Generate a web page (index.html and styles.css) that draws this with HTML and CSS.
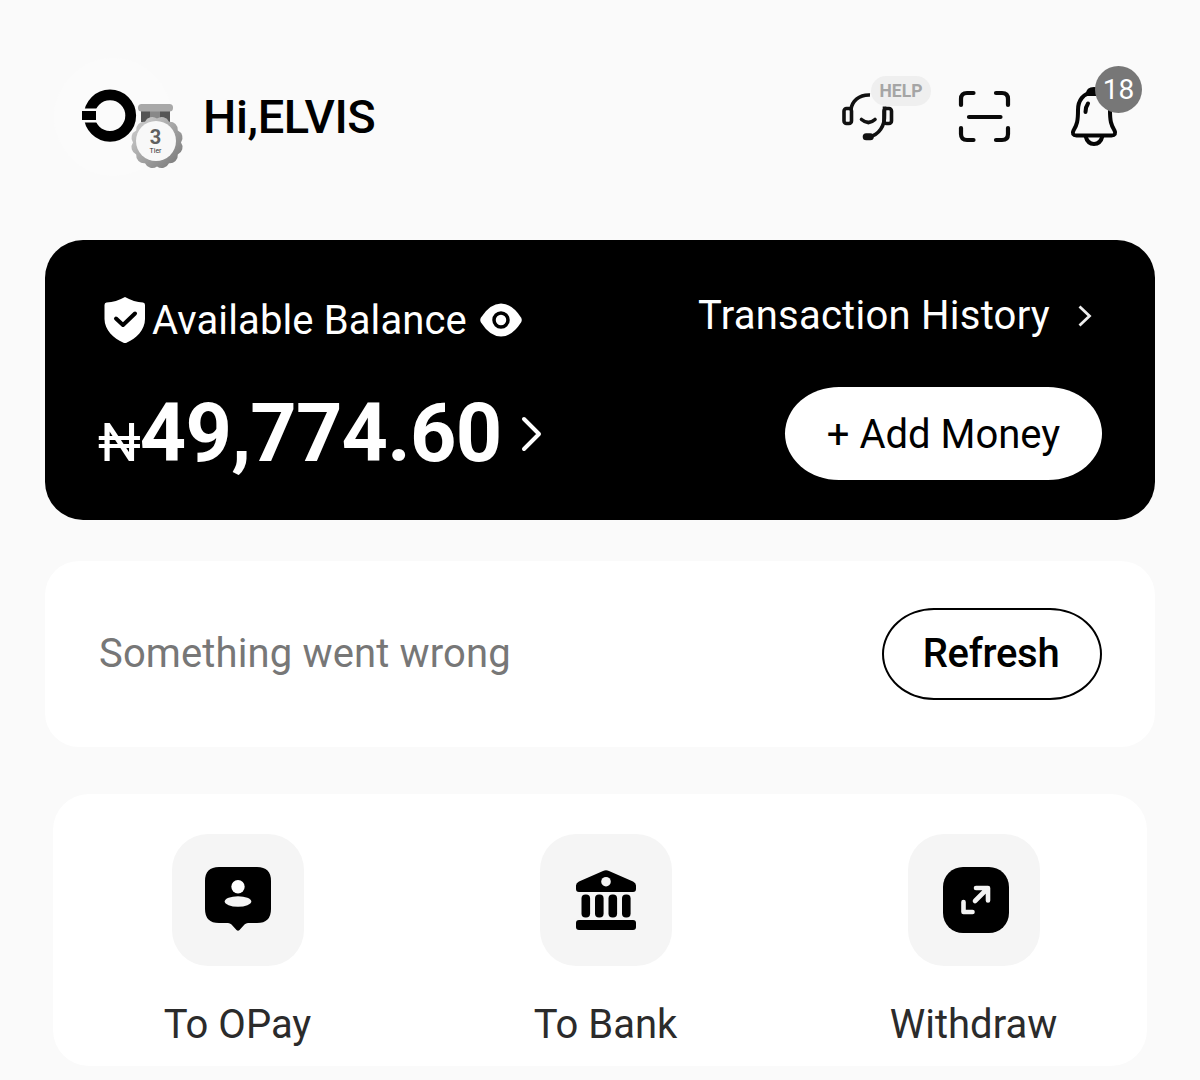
FILE: index.html
```html
<!DOCTYPE html>
<html lang="en">
<head>
    <meta charset="UTF-8">
    <meta name="viewport" content="width=device-width, initial-scale=1.0">
    <title>OPay</title>
    <link rel="stylesheet" href="styles.css">
</head>
<body>

    <header class="topbar">
        <div class="profile">
            <svg class="logo" width="120" height="120" viewBox="0 0 120 120">
                <circle cx="60" cy="60" r="59" fill="#fbfbfb"/>
                <circle cx="57" cy="58.600" r="20.700" fill="none" stroke="#000" stroke-width="10.800"/>
                <rect x="28" y="51.500" width="16" height="14" fill="#fbfbfb"/>
                <rect x="29" y="54" width="14" height="9" fill="#000"/>
            </svg>
            <div class="tier">
                <svg width="54" height="68" viewBox="0 0 54 68">
                    <defs>
                        <linearGradient id="medal" x1="0" y1="0" x2="1" y2="1">
                            <stop offset="0.2" stop-color="#c2c2c2"/>
                            <stop offset="1" stop-color="#747474"/>
                        </linearGradient>
                    </defs>
                    <rect x="11" y="8" width="29" height="12" fill="#555"/>
                    <rect x="20" y="8" width="10" height="12" fill="#888"/>
                    <rect x="8" y="2" width="35" height="7.500" rx="3.500" fill="#a8a8a8"/>
                    <path fill="url(#medal)" d="M51 40.500A8 8 0 0 1 47.800 52.500A8 8 0 0 1 39 61.300A8 8 0 0 1 27 64.500A8 8 0 0 1 15 61.300A8 8 0 0 1 6.200 52.500A8 8 0 0 1 3 40.500A8 8 0 0 1 6.200 28.500A8 8 0 0 1 15 19.700A8 8 0 0 1 27 16.500A8 8 0 0 1 39 19.700A8 8 0 0 1 47.800 28.500A8 8 0 0 1 51 40.500z"/>
                    <circle cx="26" cy="39" r="20" fill="#f8f8f8"/>
                </svg>
                <span class="tier-num">3</span>
                <span class="tier-text">Tier</span>
            </div>
            <h1 class="greeting">Hi,ELVIS</h1>
        </div>
        <div class="actions">
            <div class="action support">
                <svg width="54" height="52" viewBox="0 0 54 52" fill="none" stroke="#111" stroke-width="3.600">
                    <rect x="3" y="17.500" width="7.500" height="15" rx="2.500"/>
                    <rect x="43" y="17.500" width="7.500" height="15" rx="2.500"/>
                    <path d="M10 18.500C11 10 18 3.500 29 4"/>
                    <path d="M43.500 15.500v8C44 35 38 44 28 46"/>
                    <path d="M20.500 28.500q7 6 13.500 0" stroke-linecap="round"/>
                    <rect x="23.500" y="44" width="7.500" height="3.500" rx="1.700" fill="#111"/>
                </svg>
                <span class="help">HELP</span>
            </div>
            <div class="action">
                <svg width="54" height="54" viewBox="0 0 54 54" fill="none" stroke="#0a0a0a" stroke-width="4.200" stroke-linecap="round">
                    <path d="M4 15V9q0-6 6-6h6.500M39 3h6q6 0 6 6v6M51 38v6q0 6-6 6h-6M16.500 50H10q-6 0-6-6v-6M12 27H43.500"/>
                </svg>
            </div>
            <div class="action">
                <svg width="50" height="62" viewBox="0 0 50 62" fill="none" stroke="#050505" stroke-width="4">
                    <path d="M19 8q0-5 6-5t6 5z" fill="#050505"/>
                    <path d="M25 6.500C14 6.500 9 15 9 24c0 11-1 15-4.500 20.500-1.500 3-0.500 5 3 5h35c3.500 0 4.500-2 3-5C42 39 41 35 41 24 41 15 36 6.500 25 6.500z"/>
                    <path d="M16.500 26q0-5 2.500-8.500" stroke-linecap="round"/>
                    <path d="M16.500 50q2 8 8.500 8t8.500-8"/>
                </svg>
                <span class="count">18</span>
            </div>
        </div>
    </header>

    <main>
        <section class="balance">
            <div class="balance-left">
                <div class="balance-label">
                    <svg class="shield" width="42" height="46" viewBox="0 0 42 46">
                        <path d="M21 0Q30 5 39 5.500q2 0.300 2 2.500V22C41 33 32 41.500 23 45.500q-2 1-4 0C10 41.500 0.500 33 0.500 22V8q0-2.200 2-2.500Q12 5 21 0z" fill="#fff"/>
                        <path d="M12 21.500l7 6.500 12-11.500" fill="none" stroke="#000" stroke-width="4" stroke-linecap="round" stroke-linejoin="round"/>
                    </svg>
                    <span class="label-text">Available Balance</span>
                    <svg class="eye" width="42" height="34" viewBox="0 0 42 34">
                        <path d="M1 14.500Q10 0.500 21 0.500T41 14.500q1.500 2.500 0 5Q32 33.500 21 33.500T1 19.500q-1.500-2.500 0-5z" fill="#fff"/>
                        <circle cx="21" cy="17" r="7" fill="none" stroke="#000" stroke-width="3.500"/>
                    </svg>
                </div>
                <div class="amount">
                    <span class="currency">₦</span><span class="value">49,774.60</span>
                    <svg class="amount-arrow" width="22" height="36" viewBox="0 0 22 36" fill="none" stroke="#fff" stroke-width="4" stroke-linecap="round" stroke-linejoin="round">
                        <path d="M3 3l15 15L3 33"/>
                    </svg>
                </div>
            </div>
            <div class="balance-right">
                <a class="history">
                    <span class="history-text">Transaction History</span>
                    <svg width="14" height="22" viewBox="0 0 14 22" fill="none" stroke="#eee" stroke-width="2.800">
                        <path d="M1.500 1.500L11.500 11l-10 9.500"/>
                    </svg>
                </a>
                <button class="add-money">+ Add Money</button>
            </div>
        </section>

        <section class="notice">
            <p class="notice-text">Something went wrong</p>
            <button class="refresh">Refresh</button>
        </section>

        <section class="transfer">
            <a class="transfer-item">
                <span class="tile">
                    <svg width="68" height="68" viewBox="0 0 68 68">
                        <path d="M15 1h38q14 0 14 14v28q0 14-14 14H44q-2 0-3.500 1.500l-5 5.500q-1.500 1.500-3 0l-5-5.500Q26 57 24 57H15Q1 57 1 43V15Q1 1 15 1z" fill="#000"/>
                        <circle cx="34" cy="20.700" r="6.700" fill="#fff"/>
                        <ellipse cx="34" cy="35.500" rx="13.300" ry="5.200" fill="#f4f4f4"/>
                    </svg>
                </span>
                <span class="transfer-label">To OPay</span>
            </a>
            <a class="transfer-item">
                <span class="tile">
                    <svg width="68" height="68" viewBox="0 0 68 68">
                        <path d="M31 5q3-1.500 6 0l24 10.500q3 1.500 3 4v3.500q0 3-3 3H7q-3 0-3-3v-3.500q0-2.500 3-4z" fill="#000"/>
                        <circle cx="34" cy="15.700" r="4.800" fill="#f4f4f4"/>
                        <rect x="9.500" y="28.500" width="8.600" height="23" rx="4" fill="#000"/>
                        <rect x="23" y="28.500" width="8.600" height="23" rx="4" fill="#000"/>
                        <rect x="36.500" y="28.500" width="8.600" height="23" rx="4" fill="#000"/>
                        <rect x="50" y="28.500" width="8.600" height="23" rx="4" fill="#000"/>
                        <rect x="4" y="54" width="60" height="10" rx="3" fill="#000"/>
                    </svg>
                </span>
                <span class="transfer-label">To Bank</span>
            </a>
            <a class="transfer-item">
                <span class="tile">
                    <svg width="68" height="68" viewBox="0 0 64 68">
                        <rect x="1" y="1" width="66" height="66" rx="20" fill="#000"/>
                        <path d="M33 35L45 23M34 22H46V34.500M21.500 36V46h9" fill="none" stroke="#f4f4f4" stroke-width="4.600" stroke-linecap="round" stroke-linejoin="round"/>
                    </svg>
                </span>
                <span class="transfer-label">Withdraw</span>
            </a>
        </section>
    </main>

</body>
</html>
```

FILE: styles.css
```css
* {
    box-sizing: border-box;
}
body {
    margin: 0;
    height: 1080px;
    overflow: hidden;
    background-color: #fafafa;
    color: #000;
    font-family: Roboto, sans-serif;
    font-size: 40px;
    line-height: 48px;
}
svg {
    display: block;
    flex: none;
    overflow: visible;
}
button {
    font-family: inherit;
    font-size: 40px;
    line-height: 48px;
    padding: 0;
    white-space: nowrap;
    cursor: pointer;
}

/* Header */
.topbar {
    display: flex;
    justify-content: space-between;
    height: 240px;
    padding: 57px 81px 0 53px;
}
.profile {
    position: relative;
    display: flex;
    align-items: center;
    height: 120px;
}
.tier {
    position: absolute;
    left: 77px;
    top: 45px;
}
.tier-num, .tier-text {
    position: absolute;
    left: 5px;
    width: 41px;
    text-align: center;
}
.tier-num {
    top: 24px;
    font-size: 20px;
    line-height: 22px;
    font-weight: bold;
    color: #606060;
}
.tier-text {
    top: 45px;
    font-size: 7px;
    line-height: 9px;
    color: #333;
}
.greeting {
    margin: 0 0 0 30px;
    font-size: 47px;
    line-height: 56px;
    font-weight: 500;
    letter-spacing: -0.4px;
}
.actions {
    display: flex;
    align-items: center;
    gap: 58px;
    height: 120px;
}
.action {
    position: relative;
}
.support {
    margin-right: 4px;
}
.help {
    position: absolute;
    left: 30px;
    top: -15px;
    width: 60px;
    height: 30px;
    border-radius: 15px;
    background-color: #efefef;
    color: #a5a5a5;
    font-size: 17.5px;
    line-height: 31px;
    font-weight: bold;
    text-align: center;
}
.count {
    position: absolute;
    left: 26px;
    top: -20px;
    width: 47px;
    height: 47px;
    border-radius: 50%;
    background-color: #777;
    color: #fff;
    font-size: 28px;
    line-height: 47px;
    text-align: center;
}

/* Balance card */
.balance {
    display: flex;
    justify-content: space-between;
    height: 280px;
    margin: 0 45px;
    padding: 0 53px 0 54px;
    border-radius: 38px;
    background-color: #000;
    color: #fff;
}
.balance-left {
    padding-top: 56px;
}
.balance-label {
    display: flex;
    align-items: center;
    height: 48px;
    padding-left: 5px;
}
.label-text {
    margin: 0 13px 0 6px;
    padding-top: 2px;
    letter-spacing: 0.12px;
}
.amount {
    display: flex;
    align-items: baseline;
    height: 96px;
    margin-top: 42px;
}
.currency {
    margin-left: -1px;
    font-size: 54px;
    line-height: 96px;
    letter-spacing: -1px;
}
.value {
    font-size: 81px;
    line-height: 96px;
    font-weight: bold;
    letter-spacing: -0.8px;
}
.amount-arrow {
    align-self: center;
    margin-left: 20px;
}
.balance-right {
    display: flex;
    flex-direction: column;
    align-items: flex-end;
    padding-top: 52px;
}
.history {
    display: flex;
    align-items: center;
    gap: 28px;
    padding-right: 10px;
    letter-spacing: 0.25px;
}
.add-money {
    width: 317px;
    height: 93px;
    margin-top: 47px;
    padding-top: 2px;
    border: none;
    border-radius: 54px / 46.5px;
    background-color: #fff;
    color: #000;
}

/* Error notice */
.notice {
    display: flex;
    align-items: center;
    justify-content: space-between;
    height: 186px;
    margin: 41px 45px 0;
    padding: 0 53px 0 54px;
    border-radius: 34px;
    background-color: #fff;
}
.notice-text {
    margin: 0;
    color: #777;
    letter-spacing: 0.13px;
}
.refresh {
    width: 220px;
    height: 92px;
    padding-right: 2px;
    border: 2px solid #000;
    border-radius: 52px / 46px;
    background-color: #fff;
    color: #000;
    font-weight: 500;
    letter-spacing: -0.3px;
}

/* Transfer options */
.transfer {
    display: flex;
    justify-content: space-between;
    height: 272px;
    margin: 47px 53px 0;
    padding: 40px 73px 0 85px;
    border-radius: 36px;
    background-color: #fff;
}
.transfer-item {
    display: flex;
    flex-direction: column;
    align-items: center;
    width: 200px;
    color: #2b2b2b;
}
.tile {
    display: flex;
    align-items: center;
    justify-content: center;
    width: 132px;
    height: 132px;
    margin-bottom: 35px;
    border-radius: 36px;
    background-color: #f5f5f5;
}
.transfer-label {
    margin-left: -1px;
}
```
